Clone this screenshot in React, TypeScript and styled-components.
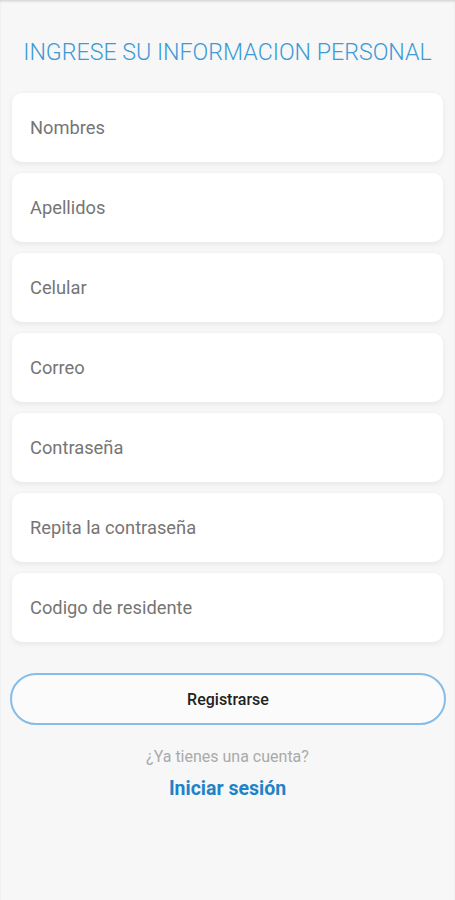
import styled, { createGlobalStyle } from "styled-components";

const fields = [
  "Nombres",
  "Apellidos",
  "Celular",
  "Correo",
  "Contraseña",
  "Repita la contraseña",
  "Codigo de residente",
];

const Global = createGlobalStyle`
  html, body {
    margin: 0;
    padding: 0;
    background: #f7f7f7;
    font-family: Roboto, "Liberation Sans", sans-serif;
  }
`;

const Screen = styled.div`
  min-height: 900px;
  display: flex;
  flex-direction: column;
  align-items: stretch;
  background: #f7f7f7;
  box-shadow: inset 0 2px 3px -1px rgba(0, 0, 0, 0.18);
`;

const Title = styled.h1`
  margin: 38px 0 0;
  text-align: center;
  font-size: 23.2px;
  font-weight: 300;
  line-height: 28px;
  color: #3b9bd6;
`;

const Form = styled.div`
  display: flex;
  flex-direction: column;
  gap: 11px;
  padding: 0 12px;
  margin-top: 27px;
`;

const Field = styled.div`
  height: 69px;
  display: flex;
  align-items: center;
  padding: 0 18px;
  background: #fff;
  border-radius: 10px;
  box-shadow: 0 2px 6px rgba(0, 0, 0, 0.07);
  font-size: 18.3px;
  color: #757575;
`;

const Button = styled.button`
  margin: 31px 9px 0 10px;
  height: 52px;
  border: 2.5px solid #86bde8;
  border-radius: 26px;
  background: #fbfbfb;
  font-family: Roboto, "Liberation Sans", sans-serif;
  font-size: 16px;
  font-weight: 500;
  color: #222;
`;

const Hint = styled.p`
  margin: 22px 0 0;
  text-align: center;
  font-size: 16px;
  color: #aaa;
`;

const Link = styled.p`
  margin: 11px 0 0;
  text-align: center;
  font-size: 19.5px;
  font-weight: 700;
  color: #1f83c8;
`;

export default function App() {
  return (
    <>
      <Global />
      <Screen>
        <Title>INGRESE SU INFORMACION PERSONAL</Title>
        <Form>
          {fields.map((f) => (
            <Field key={f}>{f}</Field>
          ))}
        </Form>
        <Button>Registrarse</Button>
        <Hint>¿Ya tienes una cuenta?</Hint>
        <Link>Iniciar sesión</Link>
      </Screen>
    </>
  );
}
